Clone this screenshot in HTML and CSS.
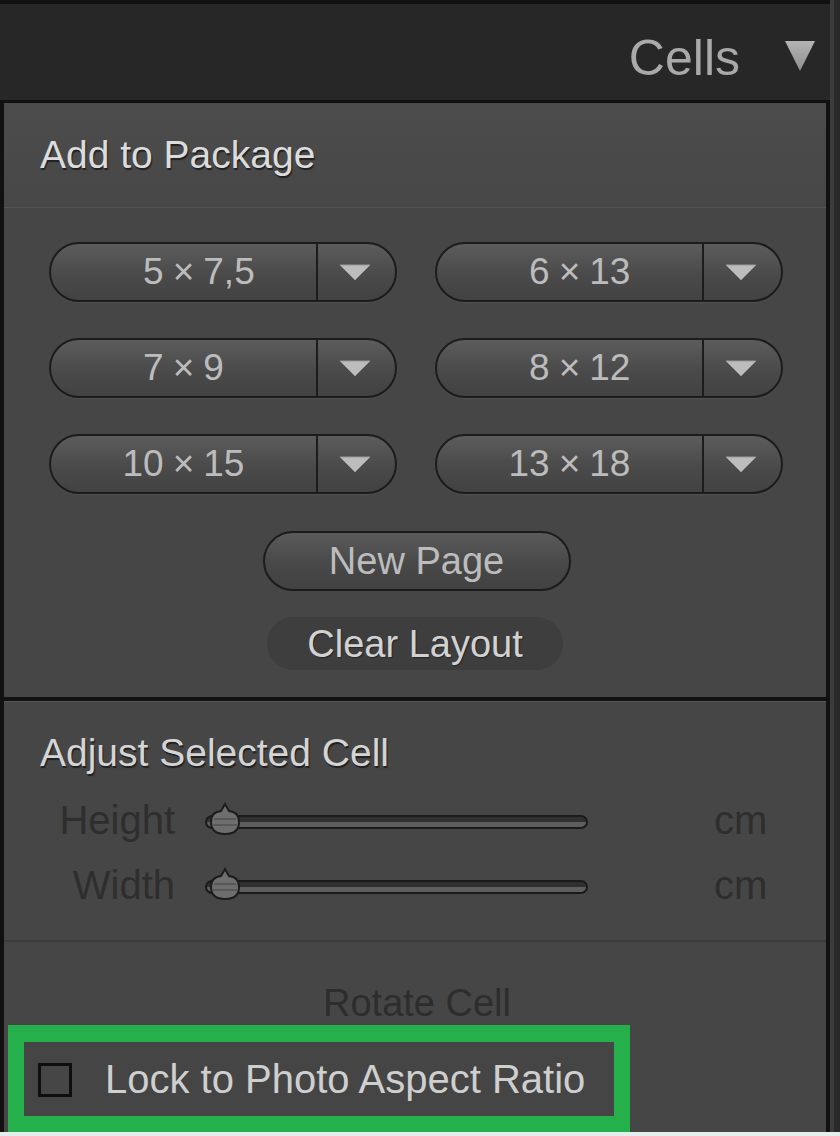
FILE: index.html
```html
<!doctype html>
<html>
<head>
  <meta charset="utf-8">
  <title>Cells</title>
  <link rel="stylesheet" href="styles.css">
</head>
<body>
  <div class="app">
    <div class="main">
      <div class="topbar"></div>
      <div class="header">
        <span class="header-title">Cells</span>
        <svg class="collapse" width="30" height="30" viewBox="0 0 30 30">
          <defs>
            <linearGradient id="tri" x1="0" y1="0" x2="0" y2="1">
              <stop offset="0" stop-color="#b4b4b4"/>
              <stop offset="1" stop-color="#8e8e8e"/>
            </linearGradient>
          </defs>
          <polygon points="0,0 30,0 15,30" fill="url(#tri)"/>
        </svg>
      </div>

      <div class="panel">
        <section class="pkg">
          <h2 class="pkg-head">Add to Package</h2>
          <div class="sizes">
            <div class="size"><span class="size-label"><span class="w">5</span><span>×</span><span class="h">7,5</span></span><span class="size-menu"><svg width="32" height="17" viewBox="0 0 32 17"><polygon points="1,1 31,1 16,16" fill="#bdbdbd" stroke="#9a9a9a" stroke-linejoin="round"/></svg></span></div>
            <div class="size"><span class="size-label"><span class="w">6</span><span>×</span><span class="h">13</span></span><span class="size-menu"><svg width="32" height="17" viewBox="0 0 32 17"><polygon points="1,1 31,1 16,16" fill="#bdbdbd" stroke="#9a9a9a" stroke-linejoin="round"/></svg></span></div>
            <div class="size"><span class="size-label"><span class="w">7</span><span>×</span><span class="h">9</span></span><span class="size-menu"><svg width="32" height="17" viewBox="0 0 32 17"><polygon points="1,1 31,1 16,16" fill="#bdbdbd" stroke="#9a9a9a" stroke-linejoin="round"/></svg></span></div>
            <div class="size"><span class="size-label"><span class="w">8</span><span>×</span><span class="h">12</span></span><span class="size-menu"><svg width="32" height="17" viewBox="0 0 32 17"><polygon points="1,1 31,1 16,16" fill="#bdbdbd" stroke="#9a9a9a" stroke-linejoin="round"/></svg></span></div>
            <div class="size"><span class="size-label"><span class="w">10</span><span>×</span><span class="h">15</span></span><span class="size-menu"><svg width="32" height="17" viewBox="0 0 32 17"><polygon points="1,1 31,1 16,16" fill="#bdbdbd" stroke="#9a9a9a" stroke-linejoin="round"/></svg></span></div>
            <div class="size"><span class="size-label"><span class="w">13</span><span>×</span><span class="h">18</span></span><span class="size-menu"><svg width="32" height="17" viewBox="0 0 32 17"><polygon points="1,1 31,1 16,16" fill="#bdbdbd" stroke="#9a9a9a" stroke-linejoin="round"/></svg></span></div>
          </div>
          <div class="actions">
            <button class="btn-page">New Page</button>
            <button class="btn-clear">Clear Layout</button>
          </div>
        </section>

        <section class="adjust">
          <h2 class="adjust-head">Adjust Selected Cell</h2>
          <div class="dim-row">
            <span class="dim-label">Height</span>
            <div class="slider">
              <div class="track"></div>
              <svg class="thumb" width="34" height="34" viewBox="0 0 34 34">
                <path d="M17 2 L21 9 Q31 10 31 20 Q31 32 17 32 Q3 32 3 20 Q3 10 13 9 Z" fill="#6e6e6e" stroke="#1c1c1c" stroke-width="2"/>
                <path d="M6 17 H28 M5 23 H29" stroke="#585858" stroke-width="2"/>
              </svg>
            </div>
            <span class="dim-unit">cm</span>
          </div>
          <div class="dim-row">
            <span class="dim-label">Width</span>
            <div class="slider">
              <div class="track"></div>
              <svg class="thumb" width="34" height="34" viewBox="0 0 34 34">
                <path d="M17 2 L21 9 Q31 10 31 20 Q31 32 17 32 Q3 32 3 20 Q3 10 13 9 Z" fill="#6e6e6e" stroke="#1c1c1c" stroke-width="2"/>
                <path d="M6 17 H28 M5 23 H29" stroke="#585858" stroke-width="2"/>
              </svg>
            </div>
            <span class="dim-unit">cm</span>
          </div>
        </section>

        <section class="rotate">
          <div class="rotate-label">Rotate Cell</div>
          <div class="lock">
            <span class="check"></span>
            <span class="lock-label">Lock to Photo Aspect Ratio</span>
          </div>
        </section>
      </div>
    </div>
    <div class="rail"></div>
  </div>
  <div class="edge"></div>
</body>
</html>
```

FILE: styles.css
```css
html, body {
  margin: 0;
  padding: 0;
}

body {
  background: #2a2a2a;
  font-family: "Liberation Sans", Arial, sans-serif;
  font-size: 39px;
  line-height: 44px;
  height: 1136px;
  overflow: hidden;
}

h2 {
  margin: 0;
  font-weight: normal;
  font-size: 39px;
}

.app {
  display: flex;
}

.main {
  width: 830px;
}

.rail {
  width: 10px;
  border-left: 4px solid #3c3c3c;
  box-sizing: border-box;
  background: #2a2a2a;
}

.topbar {
  height: 4px;
  background: #111;
}

.header {
  height: 96px;
  background: #272727;
  display: flex;
  justify-content: flex-end;
  align-items: center;
  padding: 12px 15px 0 0;
  box-sizing: border-box;
  gap: 45px;
}

.header-title {
  color: #a9a9a9;
  font-size: 50px;
  line-height: 56px;
}

.collapse {
  display: block;
  margin-top: -4px;
}

.panel {
  background: #464646;
  border-top: 3px solid #111;
  border-left: 4px solid #111;
  border-right: 4px solid #111;
  height: 1029px;
}

/* Add to Package */
.pkg {
  border-bottom: 4px solid #111;
}

.pkg-head {
  height: 104px;
  display: flex;
  align-items: center;
  padding-left: 36px;
  color: #dcdcdc;
  text-shadow: 1px 2px 1px rgba(0, 0, 0, 0.55);
  background: linear-gradient(#4c4c4c, #474747);
  border-bottom: 1px solid #545454;
}

.sizes {
  display: grid;
  grid-template-columns: 348px 348px;
  grid-auto-rows: 60px;
  column-gap: 38px;
  row-gap: 36px;
  padding: 34px 0 0 45px;
}

.size {
  display: flex;
  border: 2px solid #1c1c1c;
  border-radius: 30px;
  background: linear-gradient(#5c5c5c, #4a4a4a 55%, #424242);
  box-shadow: 0 1px 0 rgba(255, 255, 255, 0.06);
  overflow: hidden;
}

/* numbers line up on the × sign */
.size-label {
  flex: 1;
  display: grid;
  grid-template-columns: 1fr auto 1fr;
  column-gap: 9px;
  align-items: center;
  color: #bcbcbc;
  font-size: 37px;
  border-right: 2px solid #1c1c1c;
}

.size-label .w {
  text-align: right;
}

.size-menu {
  width: 77px;
  box-sizing: border-box;
  display: flex;
  align-items: center;
  justify-content: center;
  padding-right: 4px;
}

.size-menu svg {
  display: block;
}

.actions {
  display: flex;
  flex-direction: column;
  align-items: center;
  padding: 37px 0 27px;
  gap: 26px;
}

button {
  font-family: inherit;
  font-size: 38px;
  line-height: 44px;
  margin: 0;
  padding: 0;
}

.btn-page {
  width: 308px;
  height: 60px;
  border: 2px solid #1c1c1c;
  border-radius: 30px;
  background: linear-gradient(#5a5a5a, #474747 60%, #424242);
  color: #bcbcbc;
  margin-left: 3px;
}

.btn-clear {
  width: 296px;
  height: 53px;
  border: none;
  border-radius: 27px;
  background: #3e3e3e;
  color: #d2d2d2;
  text-shadow: 1px 1px 1px rgba(0, 0, 0, 0.4);
}

/* Adjust Selected Cell */
.adjust {
  border-top: 1px solid #575757;
  border-bottom: 2px solid #3b3b3b;
  padding: 29px 0 33px;
}

.adjust-head {
  padding-left: 36px;
  height: 44px;
  color: #d4d4d4;
  text-shadow: 1px 2px 1px rgba(0, 0, 0, 0.55);
}

.dim-row {
  display: flex;
  align-items: center;
  height: 44px;
  margin-top: 21px;
}

.adjust-head + .dim-row {
  margin-top: 23px;
}

.dim-label,
.dim-unit {
  color: #2e2e2e;
  font-size: 40px;
}

.dim-label {
  width: 171px;
  text-align: right;
}

.dim-unit {
  margin-left: 126px;
}

.slider {
  position: relative;
  width: 383px;
  margin-left: 30px;
  height: 34px;
  display: flex;
  align-items: center;
  margin-top: 4px;
}

.track {
  width: 100%;
  height: 14px;
  box-sizing: border-box;
  border: 2px solid #1b1b1b;
  border-radius: 7px;
  background: linear-gradient(#303030 0 45%, #5e5e5e 55%);
}

.thumb {
  position: absolute;
  left: 3px;
  top: -3px;
}

/* Rotate + lock */
.rotate {
  padding-top: 39px;
}

.rotate-label {
  text-align: center;
  color: #2d2d2d;
  font-size: 38px;
  padding-left: 4px;
}

.lock {
  box-sizing: border-box;
  width: 622px;
  height: 107px;
  margin-left: 4px;
  border: 16px solid #26b04b;
  border-top-width: 17px;
  background: #454545;
  display: flex;
  align-items: center;
  padding-left: 14px;
}

.check {
  width: 34px;
  height: 34px;
  box-sizing: border-box;
  border: 3px solid #0e0e0e;
  background: #464646;
  margin-top: 2px;
}

.lock-label {
  margin-left: 33px;
  color: #cfcfcf;
  font-size: 40px;
}

.edge {
  height: 4px;
  background: #e4eeeb;
}
```
